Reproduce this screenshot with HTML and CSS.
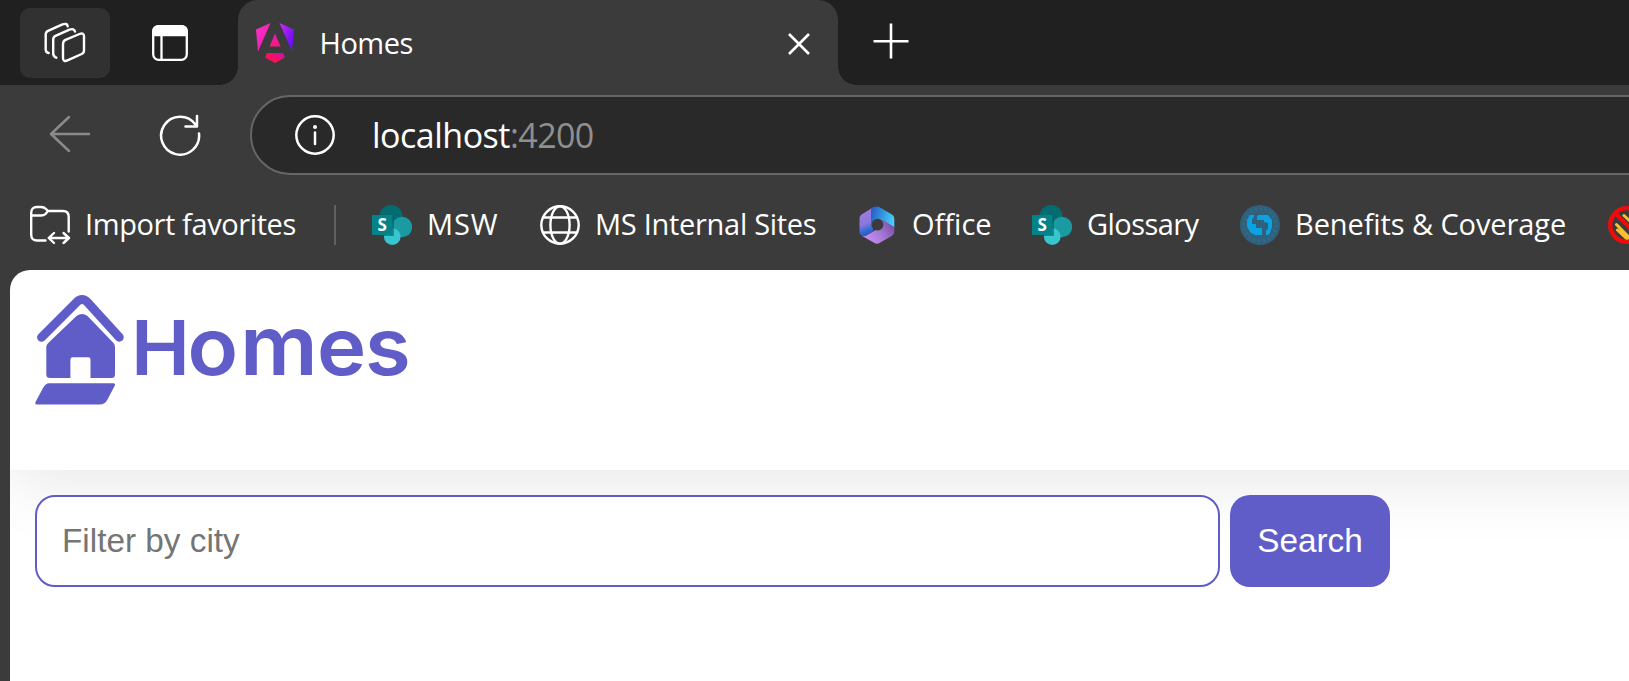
FILE: index.html
```html
<!DOCTYPE html>
<html lang="en">
<head>
<meta charset="utf-8">
<title>Homes</title>
<link rel="stylesheet" href="styles.css">
</head>
<body>
<svg class="defs" width="0" height="0" aria-hidden="true">
  <defs>
    <linearGradient id="ngA" x1="0" y1="0" x2="0.9" y2="1"><stop offset="0" stop-color="#ff33d0"/><stop offset="1" stop-color="#e718a0"/></linearGradient>
    <linearGradient id="ngB" x1="0" y1="0" x2="1" y2="1"><stop offset="0" stop-color="#d52cf0"/><stop offset="0.6" stop-color="#7c14f5"/><stop offset="1" stop-color="#5a10f0"/></linearGradient>
    <linearGradient id="ngC" x1="0" y1="1" x2="1" y2="0"><stop offset="0" stop-color="#ff1050"/><stop offset="0.5" stop-color="#f8105f"/><stop offset="1" stop-color="#c010c0"/></linearGradient>
    <linearGradient id="ngD" x1="0" y1="1" x2="0" y2="0"><stop offset="0" stop-color="#f51a78"/><stop offset="1" stop-color="#e31cc0"/></linearGradient>
    <linearGradient id="ofA" x1="0.4" y1="0" x2="0.6" y2="1"><stop offset="0" stop-color="#a87be0"/><stop offset="0.55" stop-color="#8a78dd"/><stop offset="0.8" stop-color="#2f6ad0"/><stop offset="1" stop-color="#1b55c0"/></linearGradient>
    <linearGradient id="ofB" x1="0" y1="0.3" x2="1" y2="0.6"><stop offset="0" stop-color="#2560c8"/><stop offset="1" stop-color="#48d3fa"/></linearGradient>
    <linearGradient id="ofC" x1="0" y1="0.8" x2="1" y2="0.3"><stop offset="0" stop-color="#cf93f8"/><stop offset="0.55" stop-color="#a678d6"/><stop offset="1" stop-color="#7b4fa8"/></linearGradient>
    <symbol id="sharepoint" viewBox="0 0 40 40">
      <circle cx="19" cy="11.5" r="11.5" fill="#036c70"/>
      <circle cx="30" cy="22" r="10.2" fill="#1a9ba1"/>
      <circle cx="20.3" cy="31.6" r="8.4" fill="#37c6d0"/>
      <path d="M9 11H20a2 2 0 0 1 2 2V31H9Z" fill="#024b50" opacity=".5"/>
      <rect y="10" width="20.5" height="20" rx="1" fill="#038387"/>
      <text class="sp-letter" x="10.3" y="26" text-anchor="middle">S</text>
    </symbol>
  </defs>
</svg>

<div class="tabstrip">
  <div class="tools">
    <button class="tool tool-active" aria-label="Workspaces">
      <svg width="44" height="44" viewBox="0 0 44 44" fill="none" stroke="#fff" stroke-width="2.400" stroke-linecap="round" stroke-linejoin="round">
        <path d="M5.7 32Q2.7 31.500 2.700 28.500V13.500Q2.700 11 5 9.900L19.500 3.400Q24 1.700 24.700 5.200"/>
        <path d="M13.300 36.700Q10.200 35.500 10.200 32.500V18.500Q10.200 16 12.500 14.900L26.500 8.700Q31 7 32 10.500"/>
        <path d="M22.500 18.900L36.500 13Q41 11.300 41 15.500V29.500Q41 32 38.700 33L25 39.200Q20 41.500 20 37V23Q20 20 22.500 18.900Z"/>
      </svg>
    </button>
    <button class="tool" aria-label="Tab actions">
      <svg width="36" height="36" viewBox="0 0 36 36" fill="none" stroke="#fff" stroke-width="2.300">
        <rect x="1.200" y="1.200" width="33.600" height="33.600" rx="5.500"/>
        <path d="M1.200 10V7Q1.200 1.200 7 1.200H29Q34.800 1.200 34.800 7V10Z" fill="#fff"/>
        <path d="M9.500 10V35"/>
      </svg>
    </button>
  </div>
  <div class="tab">
    <svg class="favicon" width="38" height="40" viewBox="0 0 38 40">
      <path d="M0 6.500L14.500 0L2 28.500Z" fill="url(#ngA)"/>
      <path d="M23.500 0L38 6.500L36 28.500Z" fill="url(#ngB)"/>
      <path d="M19 10.500L24.500 23.500H13.500Z" fill="url(#ngD)"/>
      <path d="M11 30H27L29 34.500L19 40L9 34.500Z" fill="url(#ngC)"/>
    </svg>
    <span class="tab-title">Homes</span>
    <svg class="close" width="22" height="22" viewBox="0 0 22 22" stroke="#fff" stroke-width="2.600"><path d="M1 1L21 21M21 1L1 21"/></svg>
  </div>
  <svg class="plus" width="36" height="36" viewBox="0 0 36 36" stroke="#fff" stroke-width="2.600"><path d="M.5 18.300H35.500M18 .5V35.500"/></svg>
</div>

<div class="toolbar">
  <svg class="back" width="42" height="38" viewBox="0 0 42 38" fill="none" stroke="#8a8a8a" stroke-width="2.500" stroke-linecap="round" stroke-linejoin="round"><path d="M20 2L2 19L20 36M2 19H40"/></svg>
  <svg class="reload" width="42" height="42" viewBox="0 0 42 42" fill="none" stroke="#fff" stroke-width="2.500" stroke-linecap="round" stroke-linejoin="round"><path d="M40 19.500A19 19 0 1 1 36.500 10.500L38 12.500M38 2V12.500H26.500"/></svg>
  <div class="address">
    <svg width="40" height="40" viewBox="0 0 40 40" fill="none" stroke="#fff" stroke-width="2.500" stroke-linecap="round"><circle cx="20" cy="20" r="18.700"/><path d="M20 17.500V29"/><circle cx="20" cy="12" r="2" fill="#fff" stroke="none"/></svg>
    <span class="url"><span class="host">localhost</span><span class="port">:4200</span></span>
  </div>
</div>

<div class="favorites">
  <div class="fav fav-import">
    <svg width="42" height="40" viewBox="0 0 42 40" fill="none" stroke="#fff" stroke-width="2.400" stroke-linecap="round" stroke-linejoin="round">
      <path d="M16.500 35.500H8Q2.200 35.500 2.200 29.500V8Q2.200 2 8 2H12Q15 2 17 4L19 6H34Q39.700 6 39.700 12V26.500M2.200 10.500H12Q15 10.500 16.500 9L19 6"/>
      <path d="M20 33H40M25 28L19.700 33L25 38M34.500 28L40 33L34.500 38"/>
    </svg>
    <span class="label l-import">Import favorites</span>
  </div>
  <div class="divider"></div>
  <div class="fav f-msw"><svg width="40" height="40"><use href="#sharepoint"/></svg><span class="label l-msw">MSW</span></div>
  <div class="fav f-sites">
    <svg width="40" height="40" viewBox="0 0 40 40" fill="none" stroke="#fff" stroke-width="2.400"><circle cx="20" cy="20" r="18.700"/><ellipse cx="20" cy="20" rx="9.600" ry="18.700"/><path d="M3 12.500H37M3 27.500H37"/></svg>
    <span class="label l-sites">MS Internal Sites</span>
  </div>
  <div class="fav f-office">
    <svg width="40" height="40" viewBox="0 0 40 40">
      <path d="M17 2L4.800 9.200Q2.500 10.600 2.500 13.300V27Q2.500 29.500 4.800 30.800Q7 32 9.500 30.500L16 26.500V6Z" fill="url(#ofA)"/>
      <path d="M14 4.500Q14.500 3.200 17.500 2Q20 1 22.500 2.300L35 9.500Q37.300 11 37.300 13.700V22.500L25 15.500L14 25Z" fill="url(#ofB)"/>
      <path d="M37.300 21.500V26.500Q37.300 29.500 35 30.800L22.500 38Q20 39.400 17.500 38L4.800 30.800Q7.500 31.800 9.500 30.500L22.500 22.800L25.500 14.800L37.300 22Z" fill="url(#ofC)"/>
      <circle cx="20.500" cy="19.700" r="5.900" fill="#3b3b3b"/>
    </svg>
    <span class="label l-office">Office</span>
  </div>
  <div class="fav f-gloss"><svg width="40" height="40"><use href="#sharepoint"/></svg><span class="label l-gloss">Glossary</span></div>
  <div class="fav f-benefits">
    <svg width="40" height="40" viewBox="0 0 40 40">
      <circle cx="20" cy="20" r="20" fill="#2f617c"/><circle cx="20" cy="20" r="16" fill="none" stroke="#356a86" stroke-width="3" stroke-dasharray="2 3"/>
      <path d="M14 10H10L7 15V21L8 24L11 28L15 30H22V23H16V19H12V14L14 12Z" fill="#0ba2e2"/>
      <path d="M18 10H28L32 15V22L30 28L28 30H26V26L28 24V18L24 17V15H17V12Z" fill="#0ba2e2"/>
    </svg>
    <span class="label l-benefits">Benefits &amp; Coverage</span>
  </div>
  <svg class="fav-cut" width="40" height="40" viewBox="0 0 40 40" fill="none">
    <path d="M9.500 19.500L22 32.500M10.500 25L20 34M17 10.500L29 22" stroke="#f9c02c" stroke-width="3" stroke-linecap="round"/>
    <circle cx="20" cy="20" r="16.800" stroke="#f00b0b" stroke-width="4.300"/><path d="M8 8L32 32" stroke="#f00b0b" stroke-width="4"/>
  </svg>
</div>

<main class="page">
  <header class="brand">
    <svg width="390" height="112" viewBox="35 295 390 112">
      <path d="M41.500 337.300L76.500 302.300Q82 296.800 87.500 302.300L119.300 337.300" fill="none" stroke="#605dc8" stroke-width="8.900" stroke-linecap="round"/>
      <path d="M46.300 347Q46.300 345 48 343.300L76.500 316Q82 312 87.500 316L113.500 343Q115 344.700 115 347V374.500Q115 378 111.500 378H90.500V359.500Q90.500 357.200 88.200 357.200H72.700Q70.400 357.200 70.400 359.500V378H50Q46.300 378 46.300 374.500Z" fill="#605dc8"/>
      <path d="M49 383.200H113Q116 383.200 114.700 385.700L107.500 399.500Q105 404.500 99.500 404.500H37Q34.500 404.500 35.500 402L43 388Q45.500 383.200 49 383.200Z" fill="#605dc8"/>
      <text class="wordmark" transform="scale(1.04 1)" x="126 180.300 230.800 304.800 351" y="375.300">H<tspan class="lower">o<tspan class="wide">m</tspan>es</tspan></text>
    </svg>
  </header>
  <section class="content">
    <form class="search">
      <input type="text" placeholder="Filter by city">
      <button type="button">Search</button>
    </form>
  </section>
</main>
</body>
</html>
```

FILE: styles.css
```css
* { box-sizing: border-box; }
html, body { height: 100%; }
body {
  margin: 0;
  display: flex;
  flex-direction: column;
  overflow: hidden;
  background: #3b3b3b;
  color: #fff;
  font-family: "Open Sans", "Noto Sans", sans-serif;
}
svg { display: block; flex: none; }
.defs { position: absolute; }

.tabstrip { display: flex; flex: none; height: 85px; background: #202020; }
.tools { display: flex; width: 238px; padding: 8px 0 0 20px; gap: 15px; flex: none; }
.tool {
  display: flex; align-items: center; justify-content: center;
  width: 90px; height: 70px; padding: 0; border: 0; border-radius: 10px;
  background: none;
}
.tool-active { background: #313131; }
.tab {
  position: relative; display: flex; align-items: center; flex: none;
  width: 600px; padding: 0 28px 0 18px;
  background: #3b3b3b; border-radius: 20px 20px 0 0;
}
.tab::before, .tab::after {
  content: ""; position: absolute; bottom: 0; width: 18px; height: 18px;
}
.tab::before { left: -18px; background: radial-gradient(circle at 0 0, #202020 17.500px, #3b3b3b 18px); }
.tab::after { right: -18px; background: radial-gradient(circle at 100% 0, #202020 17.500px, #3b3b3b 18px); }
.tab-title { margin-left: 25.500px; font-size: 29px; line-height: 40px; letter-spacing: -.5px; flex: 1; }
.favicon { margin-top: 1px; }
.close { margin-top: 3px; }
.plus { margin: 23px 0 0 35px; }

.toolbar { display: flex; flex: none; align-items: center; height: 100px; }
.back { margin: -2px 0 0 49px; }
.reload { margin-left: 68px; }
.address {
  display: flex; align-items: center; flex: 1; height: 80px;
  margin: 0 -50px 0 49px; padding-left: 43px;
  border: 2px solid #666; border-radius: 40px; background: #292929;
}
.url { display: flex; margin-left: 37px; font-size: 34px; line-height: 46px; }
.host { width: 138px; letter-spacing: -.5px; }
.port { color: #8f8f8f; letter-spacing: -.6px; }

.favorites { display: flex; flex: none; align-items: center; height: 85px; padding: 0 0 5px 29px; }
.fav { display: flex; align-items: center; flex: none; gap: 15px; }
.label { margin-top: -2px; font-size: 29px; line-height: 40px; white-space: nowrap; }
.l-import { letter-spacing: -.4px; }
.l-msw { letter-spacing: .9px; }
.l-sites { letter-spacing: -.29px; }
.l-gloss { letter-spacing: -.55px; }
.l-benefits { letter-spacing: -.1px; }
.fav-import { width: 305px; gap: 14px; }
.divider { flex: none; width: 2px; height: 40px; background: #606060; }
.f-msw { width: 168px; margin-left: 36px; }
.f-sites { width: 317px; }
.f-office { width: 175px; }
.f-gloss { width: 208px; }
.f-benefits { width: 367px; }
.sp-letter { font: 700 17px "Open Sans", sans-serif; fill: #fff; }

.page {
  flex: 1; margin-left: 10px; overflow: hidden;
  background: #fff; border-top-left-radius: 20px;
}
.brand { height: 200px; margin-right: -90px; padding: 25px; box-shadow: 0 12.500px 62.500px #e8e8e8; }
.wordmark { font: 600 76px Inter, sans-serif; fill: #605dc8; }
.lower { font-size: 80px; }
.wide { font-size: 83px; }
.content { padding: 25px; }
.search { display: flex; gap: 10px; }
.search input, .search button {
  height: 92px; border-radius: 20px;
  font-family: "Liberation Sans", Arial, sans-serif; font-size: 33.333px;
}
.search input {
  width: 1185px; padding: 0 25px; border: 2px solid #605dc8; background: #fff; outline: 0;
}
.search input::placeholder { color: #757575; }
.search button { width: 160px; padding: 0; border: 0; background: #605dc8; color: #fff; }
```
